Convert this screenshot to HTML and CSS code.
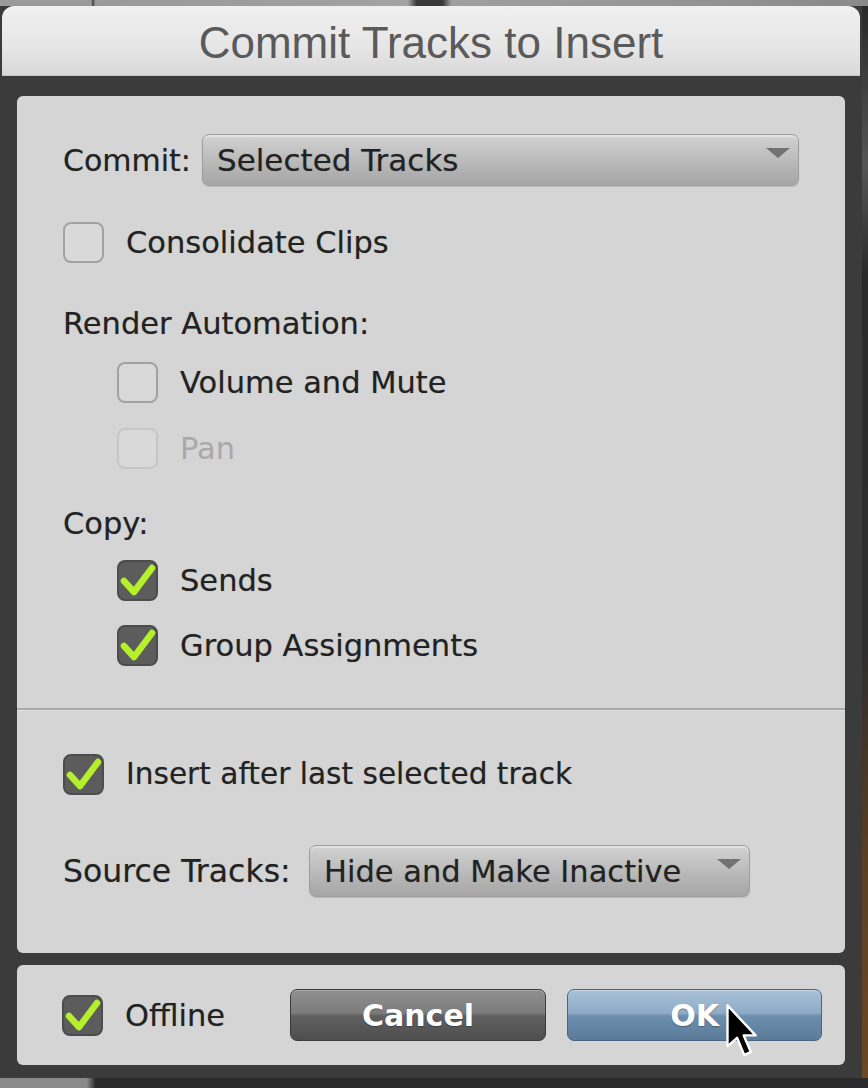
FILE: index.html
```html
<!DOCTYPE html>
<html>
<head>
<meta charset="utf-8">
<title>Commit Tracks to Insert</title>
<link rel="stylesheet" href="styles.css">
</head>
<body>
<div class="screen">
  <div class="desk-top"></div>
  <div class="middle">
    <div class="window">
      <div class="titlebar">Commit Tracks to Insert</div>
      <div class="frame">
        <div class="panel main">
          <div class="section first">
            <div class="row commit-row">
              <span class="label commit-label">Commit:</span>
              <div class="select commit-select">
                <span>Selected Tracks</span>
                <span class="arrow"></span>
              </div>
            </div>
            <div class="row check-row gap-consolidate">
              <span class="box"></span>
              <span class="text">Consolidate Clips</span>
            </div>
            <div class="label-row gap-render">Render Automation:</div>
            <div class="row check-row indent gap-volume">
              <span class="box"></span>
              <span class="text">Volume and Mute</span>
            </div>
            <div class="row check-row indent gap-pan disabled">
              <span class="box"></span>
              <span class="text">Pan</span>
            </div>
            <div class="label-row gap-copy">Copy:</div>
            <div class="row check-row indent gap-sends">
              <span class="box checked"><svg viewBox="0 0 41 41"><polyline points="7,21 17,32 35,8"/></svg></span>
              <span class="text">Sends</span>
            </div>
            <div class="row check-row indent gap-group">
              <span class="box checked"><svg viewBox="0 0 41 41"><polyline points="7,21 17,32 35,8"/></svg></span>
              <span class="text">Group Assignments</span>
            </div>
          </div>
          <div class="section second">
            <div class="row check-row gap-insert">
              <span class="box checked"><svg viewBox="0 0 41 41"><polyline points="7,21 17,32 35,8"/></svg></span>
              <span class="text insert-text">Insert after last selected track</span>
            </div>
            <div class="row commit-row gap-source">
              <span class="label source-label">Source Tracks:</span>
              <div class="select source-select">
                <span>Hide and Make Inactive</span>
                <span class="arrow"></span>
              </div>
            </div>
          </div>
        </div>
        <div class="panel footer">
          <div class="row check-row">
            <span class="box checked"><svg viewBox="0 0 41 41"><polyline points="7,21 17,32 35,8"/></svg></span>
            <span class="text">Offline</span>
          </div>
          <div class="buttons">
            <div class="btn cancel">Cancel</div>
            <div class="btn ok">OK</div>
          </div>
        </div>
      </div>
    </div>
    <div class="right-edge"></div>
  </div>
  <div class="desk-bottom"></div>
  <svg class="cursor" viewBox="0 0 15 23.5" width="36" height="56">
    <path d="M1 1 L1 18.2 L5 14.6 L8 21.8 L10.8 20.6 L7.8 13.6 L12.8 13.6 Z"/>
  </svg>
</div>
</body>
</html>
```

FILE: styles.css
```css
html, body {
  margin: 0;
  padding: 0;
}
body {
  width: 868px;
  height: 1088px;
  overflow: hidden;
  background: #3b3b3b;
  font-family: "DejaVu Sans", "Liberation Sans", sans-serif;
  color: #222;
}
.screen {
  position: relative;
  width: 868px;
  height: 1088px;
  display: flex;
  flex-direction: column;
}
.desk-top {
  height: 6px;
  background: linear-gradient(90deg, #9a9a9a 0%, #9a9a9a 10.5%, #444 10.7%, #9a9a9a 11%, #a2a2a2 47%, #3a3a3a 48%, #3a3a3a 51%, #a0a0a0 52%, #8a8a8a 100%);
}
.middle {
  display: flex;
  height: 1072px;
}
.window {
  width: 862px;
  display: flex;
  flex-direction: column;
  background: #3b3b3b;
}
.right-edge {
  width: 6px;
  background: linear-gradient(180deg, #2a2a2a 0%, #555 15%, #2a2a2a 25%, #2e2e2e 60%, #5b3f22 80%, #6a4826 100%);
}
.desk-bottom {
  height: 10px;
  background: linear-gradient(90deg, #8a8a8a 0%, #8a8a8a 10%, #2a2a2a 11%, #2a2a2a 100%);
}
.titlebar {
  height: 70px;
  margin: 0 2px;
  border-radius: 12px 12px 0 0;
  background: linear-gradient(180deg, #f0f0f0 0%, #e6e6e6 60%, #d8d8d8 100%);
  border-bottom: 1px solid #c4c4c4;
  box-sizing: border-box;
  font-family: "Liberation Sans", Arial, sans-serif;
  font-size: 44px;
  color: #5a5a5a;
  text-align: center;
  line-height: 73px;
}
.frame {
  padding: 20px 17px 6px 17px;
  display: flex;
  flex-direction: column;
  gap: 12px;
}
.panel {
  background: #d5d5d5;
  border-radius: 6px;
}
.main {
  height: 857px;
  display: flex;
  flex-direction: column;
}
.section {
  padding-left: 46px;
  display: flex;
  flex-direction: column;
}
.first {
  height: 612px;
  box-sizing: border-box;
  padding-top: 38px;
}
.second {
  border-top: 2px solid #aaaaaa;
  box-shadow: inset 0 1px 0 #e2e2e2;
}
.row {
  display: flex;
  align-items: center;
}
.commit-row {
  height: 52px;
}
.label {
  font-size: 30.5px;
  flex: none;
  text-shadow: 0 0 1px rgba(0, 0, 0, 0.3);
}
.commit-label {
  width: 139px;
  font-size: 30px;
}
.source-label {
  width: 246px;
  font-size: 31.5px;
}
.select {
  height: 52px;
  box-sizing: border-box;
  border-radius: 7px;
  border: 1px solid #9e9e9e;
  background: linear-gradient(180deg, #d2d2d2 0%, #c2c2c2 35%, #b0b0b0 75%, #a6a6a6 100%);
  box-shadow: inset 0 2px 0 rgba(255, 255, 255, 0.35), 0 1px 1px rgba(0, 0, 0, 0.12);
  padding-left: 14px;
  padding-right: 8px;
  display: flex;
  align-items: center;
  justify-content: space-between;
  font-size: 31px;
  color: #222;
  text-shadow: 0 0 1px rgba(0, 0, 0, 0.3);
}
.commit-select {
  width: 597px;
}
.source-select {
  width: 441px;
  font-size: 30.5px;
}
.arrow {
  align-self: flex-start;
  margin-top: 13px;
  width: 0;
  height: 0;
  border-left: 12px solid transparent;
  border-right: 12px solid transparent;
  border-top: 10px solid #727272;
}
.check-row {
  height: 42px;
}
.indent {
  padding-left: 54px;
}
.box {
  width: 41px;
  height: 41px;
  box-sizing: border-box;
  border: 2px solid #a2a2a2;
  border-radius: 8px;
  background: #d9d9d9;
  flex: none;
  display: flex;
}
.box svg {
  width: 41px;
  height: 41px;
  margin: -2px;
  overflow: visible;
}
.box polyline {
  fill: none;
  stroke: #b6ef2c;
  stroke-width: 6.5;
  stroke-linecap: round;
  stroke-linejoin: round;
}
.box.checked {
  background: #5c5c5c;
  border-color: #4c4c4c;
}
.text {
  margin-left: 22px;
  font-size: 30.5px;
  white-space: nowrap;
  text-shadow: 0 0 1px rgba(0, 0, 0, 0.3);
}
.insert-text {
  font-size: 29.6px;
}
.disabled .box {
  border-color: #c6c6c6;
}
.disabled .text {
  color: #a9a9a9;
  text-shadow: none;
}
.label-row {
  height: 40px;
  line-height: 40px;
  font-size: 30.5px;
  text-shadow: 0 0 1px rgba(0, 0, 0, 0.3);
}
.gap-consolidate { margin-top: 35px; }
.gap-render { margin-top: 41px; }
.gap-volume { margin-top: 17px; }
.gap-pan { margin-top: 24px; }
.gap-copy { margin-top: 35px; }
.gap-sends { margin-top: 15px; }
.gap-group { margin-top: 23px; }
.gap-insert { margin-top: 43px; }
.gap-source { margin-top: 50px; }
.footer {
  height: 100px;
  display: flex;
  align-items: center;
  padding-left: 45px;
  padding-right: 23px;
}
.buttons {
  margin-left: auto;
  display: flex;
  gap: 21px;
}
.btn {
  width: 256px;
  height: 52px;
  box-sizing: border-box;
  border-radius: 7px;
  display: flex;
  align-items: center;
  justify-content: center;
  font-weight: bold;
  font-size: 30px;
  color: #ffffff;
  text-shadow: 0 1px 1px rgba(0, 0, 0, 0.3);
}
.cancel {
  border: 1px solid #3c3c3c;
  background: linear-gradient(180deg, #909090 0%, #7c7c7c 46%, #606060 52%, #4e4e4e 100%);
  box-shadow: inset 0 1px 0 rgba(255, 255, 255, 0.25);
}
.ok {
  width: 255px;
  border: 1px solid #4a6580;
  background: linear-gradient(180deg, #aac2d8 0%, #8fabc7 46%, #6d8eae 52%, #5b7b9a 100%);
  box-shadow: inset 0 1px 0 rgba(255, 255, 255, 0.35);
}
.cursor {
  position: absolute;
  left: 725px;
  top: 1003px;
}
.cursor path {
  fill: #000;
  stroke: #fff;
  stroke-width: 1;
  stroke-linejoin: round;
}
```
